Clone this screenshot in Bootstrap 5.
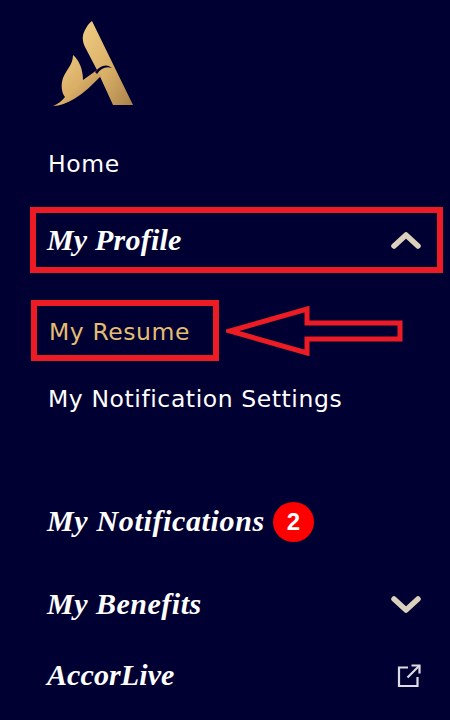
<!DOCTYPE html>
<html lang="en">

<head>
    <meta charset="UTF-8">
    <meta name="viewport" content="width=device-width, initial-scale=1.0">
    <title>My Profile menu</title>
    <link href="https://cdn.jsdelivr.net/npm/bootstrap@5.3.0/dist/css/bootstrap.min.css" rel="stylesheet">
    <style>
        body {
            background: #000033;
            color: #fff;
            height: 720px;
            overflow: hidden;
        }

        .side-menu {
            padding: 18px 7px 0 30px;
        }

        .brand-logo {
            display: block;
            margin-left: 20px;
            width: 90px;
            height: 95px;
        }

        .menu-link {
            color: #fff;
            text-decoration: none;
            font-family: "DejaVu Sans", "Liberation Sans", sans-serif;
            font-size: 23.5px;
            letter-spacing: .58px;
            padding-left: 18px;
        }

        .menu-head {
            color: #fff;
            text-decoration: none;
            font-family: "Liberation Serif", serif;
            font-style: italic;
            font-weight: 700;
            font-size: 30px;
            letter-spacing: .2px;
            padding-left: 17px;
            padding-bottom: 4px;
        }

        .home-row { height: 42px; margin-top: 31px; }
        .profile-row { height: 66px; margin-top: 21px; border: 6px solid #ed1c24; padding-left: 11px; padding-right: 16px; }
        .profile-row .menu-head { padding: 0 0 2px; }
        .resume-row { height: 61px; margin-top: 27px; }
        .resume-box { height: 61px; width: 188px; border: 6px solid #ed1c24; color: #e3bd72; padding-left: 12px; padding-top: 4px; margin-left: 1px; }
        .callout { width: 178px; height: 50px; margin-left: 7px; }
        .settings-row { height: 42px; margin-top: 18px; }
        .notify-row { height: 46px; margin-top: 78px; }
        .notify-row .menu-head { letter-spacing: .65px; }
        .count-dot {
            width: 41px;
            height: 40px;
            margin-left: 8px;
            border-radius: 50%;
            background: #f00;
            color: #fff;
            font-family: "Liberation Sans", sans-serif;
            font-weight: 700;
            font-size: 24px;
        }
        .benefits-row { height: 46px; margin-top: 37px; }
        .benefits-row .menu-head { letter-spacing: .5px; }
        .benefits-row .chevron-icon { margin-right: 22px; }
        .accor-row { height: 46px; margin-top: 25px; }
        .accor-row .menu-head { letter-spacing: .1px; }
        .chevron-icon { width: 30px; height: 20px; }
        .out-icon { width: 24px; height: 24px; margin-right: 22px; }
    </style>
</head>

<body>
    <div class="side-menu">
        <svg class="brand-logo" viewBox="50 18 90 95" aria-label="Accor">
            <defs>
                <linearGradient id="goldFill" x1="0" y1="0" x2="1" y2="1">
                    <stop offset="0" stop-color="#f0cd84"/>
                    <stop offset=".55" stop-color="#d9ae66"/>
                    <stop offset="1" stop-color="#a9814b"/>
                </linearGradient>
            </defs>
            <path fill="url(#goldFill)" d="M92 21 L133 105 H113 L97 70 L85 47 C82 41 82 35 85 30 C87 26 89 23 92 21Z"/>
            <path fill="url(#goldFill)" d="M73 55 C79 60 83 69 83 80 L97 70 L101 76 C92 85 84 93 74 99 C67 103 60 106 53 106 C58 104 62 101 65 97 C61 92 61 84 63 78 C66 70 73 65 73 55Z"/>
            <path fill="#000033" d="M95 72 C100 66 106 63 112 68 C106 66 101 68 97 74Z"/>
        </svg>

        <div class="home-row d-flex align-items-center">
            <a class="menu-link" href="#">Home</a>
        </div>

        <div class="profile-row d-flex align-items-center justify-content-between">
            <a class="menu-head" href="#">My Profile</a>
            <svg class="chevron-icon" viewBox="0 0 30 20" fill="none" stroke="#dbd0bb" stroke-width="5.500" stroke-linecap="round" stroke-linejoin="round">
                <path d="M3 16 L15 5 L27 16"/>
            </svg>
        </div>

        <div class="resume-row d-flex align-items-center">
            <a class="menu-link resume-box d-flex align-items-center" href="#">My Resume</a>
            <svg class="callout" viewBox="0 0 178 50" fill="none" stroke="#ed1c24" stroke-width="5">
                <path d="M4 25 L81 3 V17 H174 V33 H81 V47 Z"/>
            </svg>
        </div>

        <div class="settings-row d-flex align-items-center">
            <a class="menu-link" href="#">My Notification Settings</a>
        </div>

        <div class="notify-row d-flex align-items-center">
            <a class="menu-head" href="#">My Notifications</a>
            <span class="count-dot d-flex align-items-center justify-content-center">2</span>
        </div>

        <div class="benefits-row d-flex align-items-center justify-content-between">
            <a class="menu-head" href="#">My Benefits</a>
            <svg class="chevron-icon" viewBox="0 0 30 20" fill="none" stroke="#dbd0bb" stroke-width="5.500" stroke-linecap="round" stroke-linejoin="round">
                <path d="M3 4 L15 15 L27 4"/>
            </svg>
        </div>

        <div class="accor-row d-flex align-items-center justify-content-between">
            <a class="menu-head" href="#">AccorLive</a>
            <svg class="out-icon" viewBox="0 0 24 24" fill="none" stroke="#dcdce4" stroke-width="2.2">
                <path d="M11 3.5 H2 V22 H20.500 V13"/>
                <path d="M10.500 13.500 L22 2"/>
                <path d="M14.500 1.500 H22.500 V9.500"/>
            </svg>
        </div>
    </div>

    <script src="https://cdn.jsdelivr.net/npm/bootstrap@5.3.0/dist/js/bootstrap.bundle.min.js"></script>
</body>

</html>
